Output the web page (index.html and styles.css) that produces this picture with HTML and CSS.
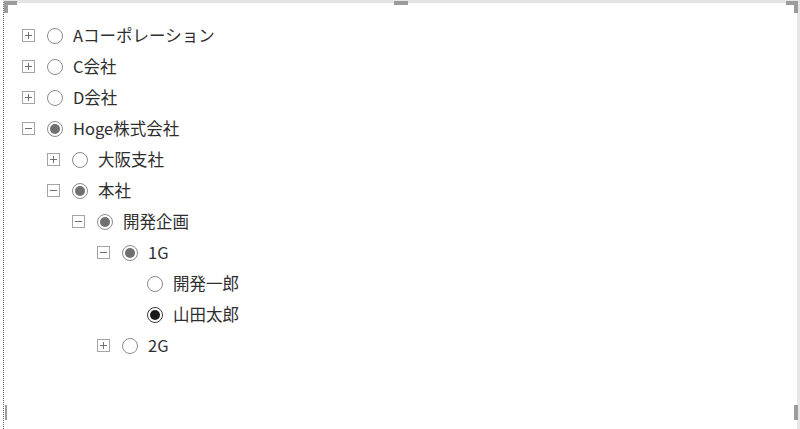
FILE: index.html
```html
<!DOCTYPE html>
<html lang="ja">
<head>
    <meta charset="UTF-8">
    <title>TreeView</title>
    <link rel="stylesheet" href="styles.css">
</head>
<body>
    <div class="surface">
        <span class="handle handle-tl"></span>
        <span class="handle handle-top"></span>
        <span class="handle handle-tr"></span>
        <span class="handle handle-left"></span>
        <span class="handle handle-right"></span>

        <ul class="tree">
            <li><div class="row"><span class="exp plus"></span><span class="radio"></span><span class="label">Aコーポレーション</span></div></li>
            <li><div class="row"><span class="exp plus"></span><span class="radio"></span><span class="label">C会社</span></div></li>
            <li><div class="row"><span class="exp plus"></span><span class="radio"></span><span class="label">D会社</span></div></li>
            <li>
                <div class="row"><span class="exp minus"></span><span class="radio partial"></span><span class="label">Hoge株式会社</span></div>
                <ul>
                    <li><div class="row"><span class="exp plus"></span><span class="radio"></span><span class="label">大阪支社</span></div></li>
                    <li>
                        <div class="row"><span class="exp minus"></span><span class="radio partial"></span><span class="label">本社</span></div>
                        <ul>
                            <li>
                                <div class="row"><span class="exp minus"></span><span class="radio partial"></span><span class="label">開発企画</span></div>
                                <ul>
                                    <li>
                                        <div class="row"><span class="exp minus"></span><span class="radio partial"></span><span class="label">1G</span></div>
                                        <ul>
                                            <li><div class="row"><span class="exp none"></span><span class="radio"></span><span class="label">開発一郎</span></div></li>
                                            <li><div class="row"><span class="exp none"></span><span class="radio checked"></span><span class="label">山田太郎</span></div></li>
                                        </ul>
                                    </li>
                                    <li><div class="row"><span class="exp plus"></span><span class="radio"></span><span class="label">2G</span></div></li>
                                </ul>
                            </li>
                        </ul>
                    </li>
                </ul>
            </li>
        </ul>
    </div>
</body>
</html>
```
FILE: styles.css
```css
html, body {
    margin: 0;
    padding: 0;
    height: 100%;
    background: #ffffff;
}
.surface {
    position: relative;
    box-sizing: border-box;
    height: 429px;
    margin-left: 3px;
    border-top: 3px solid #e4e4e4;
    border-left: 1px dotted #6a6a6a;
    border-right: 3px solid #e6e6e6;
    font-family: "Noto Sans CJK JP", "Noto Sans", sans-serif;
    font-size: 16.5px;
    color: #2e2e2e;
}
.handle {
    position: absolute;
    background: #9c9c9c;
}
.handle-tl {
    left: 0;
    top: -2px;
    width: 13px;
    height: 4px;
}
.handle-tl::after {
    content: "";
    position: absolute;
    left: 0;
    top: 0;
    width: 4px;
    height: 12px;
    background: #9c9c9c;
}
.handle-top {
    left: 390px;
    top: -2px;
    width: 14px;
    height: 4px;
}
.handle-tr {
    right: -1px;
    top: -2px;
    width: 12px;
    height: 4px;
}
.handle-tr::after {
    content: "";
    position: absolute;
    right: 0;
    top: 0;
    width: 4px;
    height: 12px;
    background: #9c9c9c;
}
.handle-left {
    left: 1px;
    top: 402px;
    width: 2px;
    height: 15px;
}
.handle-right {
    right: -1px;
    top: 402px;
    width: 4px;
    height: 15px;
}
.tree, .tree ul {
    list-style: none;
    margin: 0;
    padding: 0;
}
.tree {
    padding: 17px 0 0 18px;
}
.tree ul {
    padding-left: 25px;
}
.row {
    display: flex;
    align-items: center;
    height: 31px;
}
.exp {
    position: relative;
    box-sizing: border-box;
    width: 13px;
    height: 13px;
    margin-right: 12px;
    border: 1px solid #a4a4a4;
    flex: none;
}
.exp.none {
    border: none;
}
.exp.plus::before,
.exp.minus::before {
    content: "";
    position: absolute;
    left: 2px;
    top: 5px;
    width: 7px;
    height: 1px;
    background: #707070;
}
.exp.plus::after {
    content: "";
    position: absolute;
    left: 5px;
    top: 2px;
    width: 1px;
    height: 7px;
    background: #707070;
}
.radio {
    position: relative;
    box-sizing: border-box;
    width: 16px;
    height: 16px;
    margin-right: 10px;
    border: 1px solid #8c8c8c;
    border-radius: 50%;
    background: #ffffff;
    flex: none;
}
.radio.partial::after,
.radio.checked::after {
    content: "";
    position: absolute;
    left: 2px;
    top: 2px;
    width: 10px;
    height: 10px;
    border-radius: 50%;
    background: #707070;
}
.radio.checked {
    border-color: #3a3a3a;
}
.radio.checked::after {
    background: #1c1c1c;
}
.label {
    white-space: nowrap;
    line-height: 1;
}
```
